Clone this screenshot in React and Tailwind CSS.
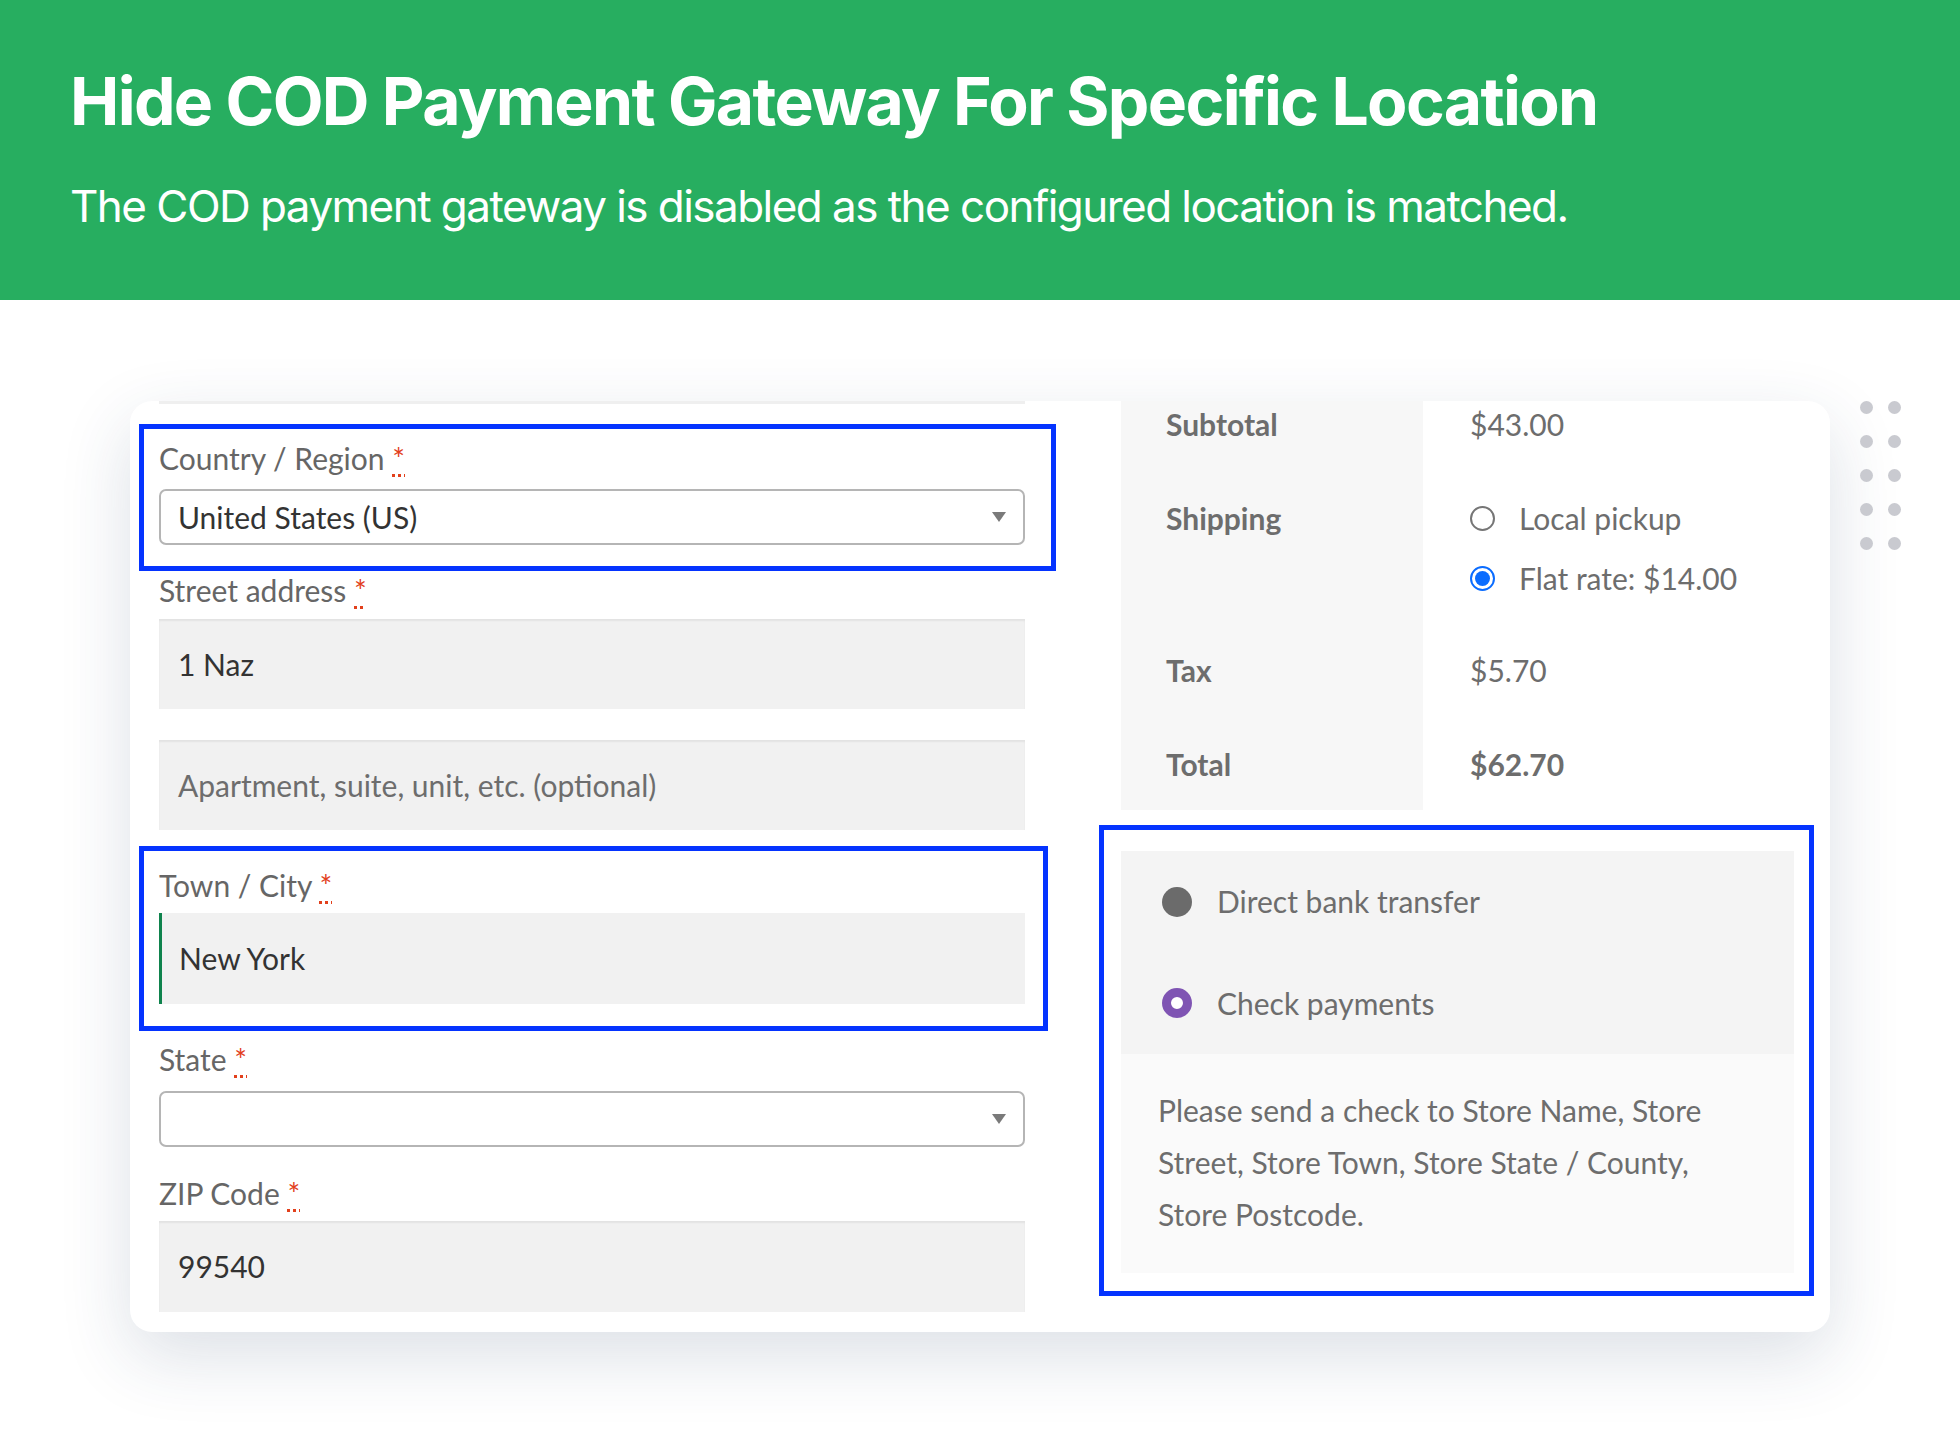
import React from 'react';

const Req = () => (
  <abbr className="text-[#e2401c] no-underline">
    <span className="underline decoration-dotted decoration-[#e2401c] underline-offset-[4px]">*</span>
  </abbr>
);

const Label = ({ children }) => (
  <label className="block text-[30px] leading-[36px] text-[#666]">
    {children} <Req />
  </label>
);

const Arrow = () => (
  <svg width="14" height="10" viewBox="0 0 14 10" className="shrink-0">
    <polygon points="0,0 14,0 7,10" fill="#7a7a7a" />
  </svg>
);

const SelectBox = ({ value }) => (
  <div className="flex items-center justify-between h-[56px] rounded-[7px] border-2 border-[#b5b5b5] bg-white pl-[17px] pr-[17px]">
    <span className="text-[30px] text-[#333]">{value}</span>
    <Arrow />
  </div>
);

const TextInput = ({ value, placeholder, focused, h = 'h-[90px]' }) => (
  <div
    className={
      focused
        ? `flex items-center ${h} bg-[#f1f1f1] border-l-[3px] border-[#0f834d] pl-[17px]`
        : `flex items-center ${h} bg-[#f1f1f1] shadow-[inset_0_2px_2px_rgba(0,0,0,0.06)] pl-[19px]`
    }
  >
    {value ? (
      <span className="text-[30px] text-[#333]">{value}</span>
    ) : (
      <span className="text-[30px] text-[#6d6d6d]">{placeholder}</span>
    )}
  </div>
);

export default function App() {
  return (
    <div className="w-[1960px] h-[1432px] bg-white overflow-hidden font-['Lato',sans-serif]">
      <header className="h-[300px] bg-[#27ae60] pl-[70px] pt-[68px] font-['Inter',sans-serif] text-white">
        <h1 className="text-[66px] leading-[67px] font-bold tracking-[-0.025em]">
          Hide COD Payment Gateway For Specific Location
        </h1>
        <p className="mt-[49px] text-[44px] leading-[44px] tracking-[-0.035em]">
          The COD payment gateway is disabled as the configured location is matched.
        </p>
      </header>

      <div className="flex pt-[101px]">
        <div className="ml-[130px] w-[1700px] h-[931px] rounded-[22px] bg-white shadow-[0_24px_70px_rgba(40,60,100,0.16)] flex overflow-hidden">
          {/* billing fields */}
          <div className="ml-[29px] w-[866px] shrink-0">
            <div className="h-[3px] bg-[#efefef]" />

            <div className="mt-[20px] -ml-[20px] w-[917px] border-[5px] border-[#0433ff] pl-[15px] pr-[26px] pt-[11px] pb-[21px]">
              <Label>Country / Region</Label>
              <div className="mt-[13px]">
                <SelectBox value="United States (US)" />
              </div>
            </div>

            <div className="mt-[1px]">
              <Label>Street address</Label>
            </div>
            <div className="mt-[11px]">
              <TextInput value="1 Naz" />
            </div>
            <div className="mt-[31px]">
              <TextInput placeholder="Apartment, suite, unit, etc. (optional)" />
            </div>

            <div className="mt-[16px] -ml-[20px] w-[909px] border-[5px] border-[#0433ff] pl-[15px] pr-[18px] pt-[16px] pb-[22px]">
              <Label>Town / City</Label>
              <div className="mt-[10px]">
                <TextInput value="New York" focused h="h-[91px]" />
              </div>
            </div>

            <div className="mt-[10px]">
              <Label>State</Label>
            </div>
            <div className="mt-[14px]">
              <SelectBox value="" />
            </div>

            <div className="mt-[28px]">
              <Label>ZIP Code</Label>
            </div>
            <div className="mt-[10px]">
              <TextInput value="99540" h="h-[91px]" />
            </div>
          </div>

          {/* order review */}
          <div className="ml-[74px] w-[715px] shrink-0">
            <div className="ml-[22px] w-[673px] text-[30px] leading-[36px] text-[#6d6d6d]">
              <div className="flex">
                <div className="w-[302px] shrink-0 bg-[#f7f7f7] pl-[45px] pt-[5px] pb-[35px] font-bold">Subtotal</div>
                <div className="pl-[47px] pt-[5px]">$43.00</div>
              </div>

              <div className="flex">
                <div className="w-[302px] shrink-0 bg-[#f7f7f7] pl-[45px] pt-[23px] font-bold">Shipping</div>
                <div className="pl-[47px] pt-[23px] pb-[33px]">
                  <div className="flex items-center gap-[24px]">
                    <span className="w-[25px] h-[25px] rounded-full border-2 border-[#767676] bg-white" />
                    <span>Local pickup</span>
                  </div>
                  <div className="mt-[24px] flex items-center gap-[24px]">
                    <span className="w-[25px] h-[25px] rounded-full border-2 border-[#0a6cff] bg-white flex items-center justify-center">
                      <span className="w-[15px] h-[15px] rounded-full bg-[#0a6cff]" />
                    </span>
                    <span>Flat rate: $14.00</span>
                  </div>
                </div>
              </div>

              <div className="flex">
                <div className="w-[302px] shrink-0 bg-[#f7f7f7] pl-[45px] pt-[23px] pb-[35px] font-bold">Tax</div>
                <div className="pl-[47px] pt-[23px]">$5.70</div>
              </div>

              <div className="flex">
                <div className="w-[302px] shrink-0 bg-[#f7f7f7] pl-[45px] pt-[23px] pb-[28px] font-bold">Total</div>
                <div className="pl-[47px] pt-[23px] font-bold">$62.70</div>
              </div>
            </div>

            {/* payment methods */}
            <div className="mt-[15px] border-[5px] border-[#0433ff] pl-[17px] pr-[15px] pt-[21px] pb-[18px]">
              <div className="bg-[#f4f4f4]">
                <div className="h-[101px] flex items-center pl-[41px] gap-[25px]">
                  <span className="w-[30px] h-[30px] rounded-full bg-[#6b6b6b]" />
                  <span className="text-[30px] text-[#6d6d6d]">Direct bank transfer</span>
                </div>
                <div className="h-[102px] flex items-center pl-[41px] gap-[25px]">
                  <span className="w-[30px] h-[30px] rounded-full border-[9px] border-[#7f54b3] bg-white" />
                  <span className="text-[30px] text-[#6d6d6d]">Check payments</span>
                </div>
              </div>
              <div className="bg-[#fafafa] pl-[37px] pt-[30px] pb-[33px]">
                <p className="text-[30px] leading-[52px] text-[#6d6d6d]">
                  Please send a check to Store Name, Store
                  <br />
                  Street, Store Town, Store State / County,
                  <br />
                  Store Postcode.
                </p>
              </div>
            </div>
          </div>
        </div>

        {/* decorative dots */}
        <div className="ml-[30px] grid grid-cols-2 gap-x-[15px] gap-y-[21px] h-fit">
          {Array.from({ length: 10 }).map((_, i) => (
            <span key={i} className="w-[13px] h-[13px] rounded-full bg-[#c9cad0]" />
          ))}
        </div>
      </div>
    </div>
  );
}
